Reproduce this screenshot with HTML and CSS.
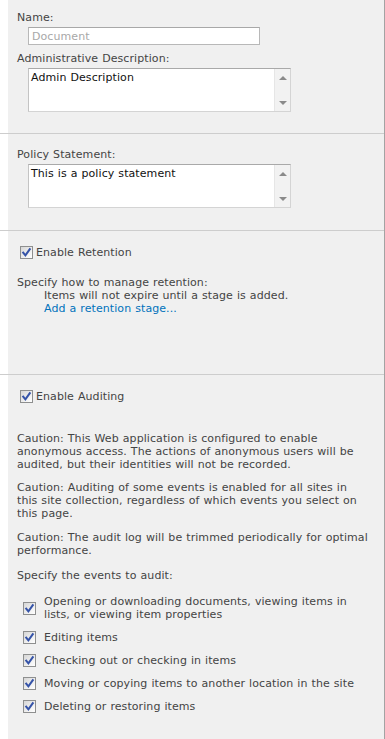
FILE: index.html
```html
<!DOCTYPE html>
<html>
<head>
<meta charset="utf-8">
<link rel="stylesheet" href="styles.css">
</head>
<body>
<div class="panel">
  <section class="section s1">
    <div class="label">Name:</div>
    <div class="input"><span class="placeholder">Document</span></div>
    <div class="label label-gap">Administrative Description:</div>
    <div class="textarea">
      <div class="ta-text">Admin Description</div>
      <div class="ta-scroll"><span class="arr-up"></span><span class="arr-down"></span></div>
    </div>
  </section>

  <section class="section s2">
    <div class="label">Policy Statement:</div>
    <div class="textarea">
      <div class="ta-text">This is a policy statement</div>
      <div class="ta-scroll"><span class="arr-up"></span><span class="arr-down"></span></div>
    </div>
  </section>

  <section class="section s3">
    <div class="check-row">
      <span class="cb"><svg viewBox="0 0 11 11"><path d="M2.2 5.6 L4.4 8.4 L8.8 2.2" /></svg></span>
      <span>Enable Retention</span>
    </div>
    <div class="text-block">
      <div>Specify how to manage retention:</div>
      <div class="indent">Items will not expire until a stage is added.</div>
      <div class="indent"><a class="link" href="#">Add a retention stage...</a></div>
    </div>
  </section>

  <section class="section s4">
    <div class="check-row">
      <span class="cb"><svg viewBox="0 0 11 11"><path d="M2.2 5.6 L4.4 8.4 L8.8 2.2" /></svg></span>
      <span>Enable Auditing</span>
    </div>
    <p class="caution first">Caution: This Web application is configured to enable anonymous access. The actions of anonymous users will be audited, but their identities will not be recorded.</p>
    <p class="caution p2">Caution: Auditing of some events is enabled for all sites in this site collection, regardless of which events you select on this page.</p>
    <p class="caution p3">Caution: The audit log will be trimmed periodically for optimal performance.</p>
    <p class="caution p4">Specify the events to audit:</p>
    <ul class="events">
      <li class="event"><span class="cb"><svg viewBox="0 0 11 11"><path d="M2.2 5.6 L4.4 8.4 L8.8 2.2" /></svg></span><span>Opening or downloading documents, viewing items in lists, or viewing item properties</span></li>
      <li class="event"><span class="cb"><svg viewBox="0 0 11 11"><path d="M2.2 5.6 L4.4 8.4 L8.8 2.2" /></svg></span><span>Editing items</span></li>
      <li class="event"><span class="cb"><svg viewBox="0 0 11 11"><path d="M2.2 5.6 L4.4 8.4 L8.8 2.2" /></svg></span><span>Checking out or checking in items</span></li>
      <li class="event"><span class="cb"><svg viewBox="0 0 11 11"><path d="M2.2 5.6 L4.4 8.4 L8.8 2.2" /></svg></span><span>Moving or copying items to another location in the site</span></li>
      <li class="event"><span class="cb"><svg viewBox="0 0 11 11"><path d="M2.2 5.6 L4.4 8.4 L8.8 2.2" /></svg></span><span>Deleting or restoring items</span></li>
    </ul>
  </section>
</div>
</body>
</html>
```

FILE: styles.css
```css
html, body {
  margin: 0;
  padding: 0;
  background: #ffffff;
}

body {
  font-family: "DejaVu Sans", Verdana, sans-serif;
  font-size: 11px;
  letter-spacing: 0.08px;
  word-spacing: 0.4px;
  line-height: 13px;
  color: #444444;
}

.panel {
  width: 385px;
  min-height: 739px;
  box-sizing: border-box;
  border-right: 1px solid #a3a3a3;
  background: linear-gradient(to right, #ffffff 8px, #f0f0f0 8px);
}

.section {
  border-bottom: 1px solid #cdcdcd;
  padding-left: 17px;
  padding-right: 14px;
}

.s1 { padding-top: 11px; padding-bottom: 21px; }
.s2 { padding-top: 14px; padding-bottom: 22px; }
.s3 { padding-top: 15px; padding-bottom: 59px; }
.s4 { padding-top: 15px; padding-bottom: 30px; border-bottom: none; }

.label-gap { margin-top: 7px; }

.input {
  margin-top: 3px;
  margin-left: 11px;
  width: 232px;
  height: 18px;
  box-sizing: border-box;
  background: #ffffff;
  border: 1px solid #b8b8b8;
  border-top-color: #a8a8a8;
  padding: 2px 3px 1px;
}

.placeholder { color: #a8a8a8; }

.textarea {
  margin-top: 3px;
  margin-left: 11px;
  width: 263px;
  height: 44px;
  box-sizing: border-box;
  background: #ffffff;
  border: 1px solid #d4d4d4;
  border-top-color: #a9a9a9;
  border-left-color: #c4c4c4;
  display: flex;
}

.ta-text {
  flex: 1;
  padding: 2px 2px;
  color: #111111;
}

.ta-scroll {
  width: 16px;
  box-sizing: border-box;
  background: #f2f2f2;
  border-left: 1px solid #e6e6e6;
  display: flex;
  flex-direction: column;
  align-items: center;
  justify-content: space-between;
  padding: 7px 0 6px;
}

.arr-up, .arr-down {
  width: 0;
  height: 0;
  border-left: 4px solid transparent;
  border-right: 4px solid transparent;
}
.arr-up { border-bottom: 4px solid #8a8a8a; }
.arr-down { border-top: 4px solid #8a8a8a; }

.check-row {
  display: flex;
  align-items: center;
  height: 13px;
  gap: 3px;
  padding-left: 3px;
}

.cb {
  flex: none;
  width: 11px;
  height: 11px;
  border: 1px solid #8e8f8f;
  background: linear-gradient(135deg, #d6d6d6 0%, #f4f4f4 70%, #ffffff 100%);
  display: inline-flex;
}

.cb svg {
  width: 11px;
  height: 11px;
}

.cb path {
  fill: none;
  stroke: #3553a8;
  stroke-width: 2;
  stroke-linecap: square;
}

.text-block { margin-top: 17px; }

.indent { padding-left: 27px; }

.link {
  color: #0072bc;
  text-decoration: none;
}

.caution { margin: 0; }
.caution.first { margin-top: 29px; }
.caution.p2 { margin-top: 10px; }
.caution.p3 { margin-top: 11px; }
.caution.p4 { margin-top: 12px; }

.events {
  list-style: none;
  margin: 13px 0 0;
  padding: 0 0 0 6px;
  display: flex;
  flex-direction: column;
  gap: 10px;
}

.event {
  display: flex;
  align-items: center;
  gap: 8px;
}
```
